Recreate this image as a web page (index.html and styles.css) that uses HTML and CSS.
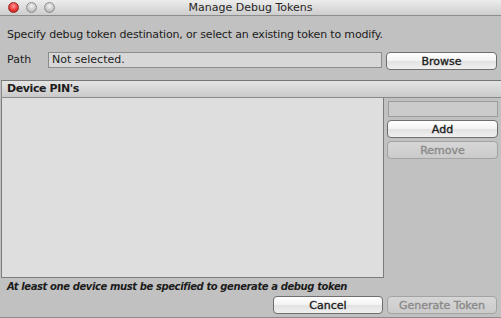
FILE: index.html
```
<!DOCTYPE html>
<html lang="en">
<head>
  <meta charset="UTF-8">
  <title>Manage Debug Tokens</title>
  <link rel="stylesheet" href="styles.css">
</head>
<body>
  <div class="window">
    <!-- title bar -->
    <div class="titlebar">
      <div class="lights">
        <span class="light close"></span>
        <span class="light"></span>
        <span class="light"></span>
      </div>
      <div class="title">Manage Debug Tokens</div>
      <div></div>
    </div>

    <p class="intro">Specify debug token destination, or select an existing token to modify.</p>

    <div class="path-row">
      <span class="path-label">Path</span>
      <div class="field path-field">Not selected.</div>
      <button class="btn">Browse</button>
    </div>

    <div class="section-head">Device PIN's</div>

    <div class="pins">
      <div class="pin-list"></div>
      <div class="pin-side">
        <div class="field pin-input"></div>
        <button class="btn">Add</button>
        <button class="btn" disabled>Remove</button>
      </div>
    </div>

    <p class="note">At least one device must be specified to generate a debug token</p>

    <div class="actions">
      <button class="btn">Cancel</button>
      <button class="btn" disabled>Generate Token</button>
    </div>
  </div>
</body>
</html>
```

FILE: styles.css
```
body{
  margin: 0;
  background: #c1c1c1;
  font-family: "DejaVu Sans", sans-serif;
  font-size: 11px;
  color: #1c1c1c;
}
.window{
  width: 501px;
  height: 318px;
  box-sizing: border-box;
  border-bottom: 1px solid #8a8a8a;
  background: #c1c1c1;
  overflow: hidden;
}
.titlebar{
  height: 15px;
  border-bottom: 1px solid #8d8d8d;
  background: linear-gradient(#ededed, #cdcdcd);
  display: grid;
  grid-template-columns: 1fr auto 1fr;
  align-items: center;
}
.lights{
  display: flex;
  gap: 7px;
  padding-left: 8px;
}
.light{
  width: 11px;
  height: 11px;
  border-radius: 50%;
  box-sizing: border-box;
  border: 1px solid #8f8f8f;
  background: radial-gradient(circle at 50% 35%, #f4f4f4, #bdbdbd 70%, #9e9e9e);
}
.light.close{
  border-color: #9b2a2a;
  background: radial-gradient(circle at 50% 35%, #ff9a9a, #e8322f 60%, #a31818);
}
.title{
  font-size: 11px;
  color: #262626;
}
.intro{
  margin: 11px 0 0 7px;
  line-height: 16px;
  letter-spacing: -0.17px;
}
.path-row{
  display: flex;
  align-items: flex-start;
  margin-top: 9px;
  height: 18px;
}
.path-label{
  width: 41px;
  padding-left: 7px;
  line-height: 16px;
}
.field{
  box-sizing: border-box;
  height: 16px;
  border: 1px solid #8c8c8c;
  background: #d7d7d7;
  line-height: 14px;
  padding-left: 3px;
}
.path-field{
  width: 334px;
  margin-right: 4px;
}
.btn{
  box-sizing: border-box;
  width: 111px;
  height: 18px;
  padding: 0;
  border: 1px solid #6e6e6e;
  border-radius: 4px;
  background: linear-gradient(#ffffff, #f2f2f2 50%, #e2e2e2 51%, #f0f0f0);
  font-family: inherit;
  font-size: 11px;
  -webkit-text-stroke: 0.35px currentColor;
  color: #1c1c1c;
}
.btn:disabled{
  border-color: #a3a3a3;
  background: linear-gradient(#d6d6d6, #cbcbcb);
  color: #8a8a8a;
}
.section-head{
  margin-top: 10px;
  height: 16px;
  border-top: 1px solid #767676;
  border-bottom: 1px solid #8a8a8a;
  border-left: 1px solid #8a8a8a;
  margin-left: 1px;
  background: linear-gradient(#e4e4e4, #cacaca);
  font-weight: bold;
  letter-spacing: -0.4px;
  line-height: 16px;
  padding-left: 5px;
}
.pins{
  display: flex;
  height: 180px;
}
.pin-list{
  box-sizing: border-box;
  width: 383px;
  margin-left: 1px;
  border: 1px solid #7c7c7c;
  border-top: none;
  background: #dedede;
}
.pin-side{
  display: flex;
  flex-direction: column;
  gap: 3px;
  padding: 3px 0 0 3px;
}
.pin-input{
  width: 110px;
  margin-left: 1px;
  background: #cbcbcb;
  border-color: #9c9c9c;
}
.note{
  margin: 1px 0 0 7px;
  line-height: 16px;
  font-style: italic;
  font-weight: bold;
  font-size: 10px;
  letter-spacing: -0.4px;
}
.actions{
  display: flex;
  justify-content: flex-end;
  gap: 4px;
  padding-right: 4px;
  margin-top: 1px;
}
.actions .btn{
  width: 110px;
}
```
